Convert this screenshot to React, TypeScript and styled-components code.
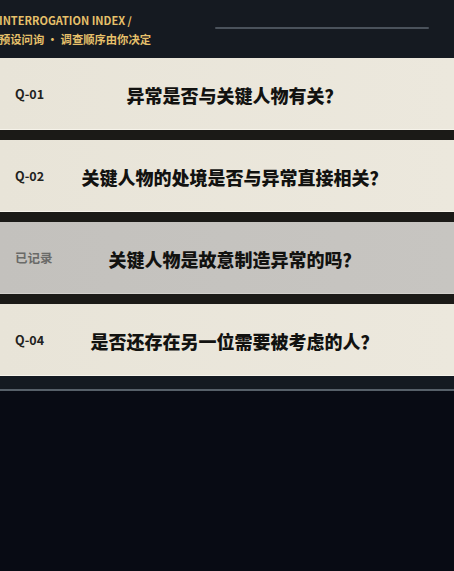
import React from "react";
import styled, { createGlobalStyle } from "styled-components";

const GlobalStyle = createGlobalStyle`
  html, body {
    margin: 0;
    padding: 0;
    background: #080b14;
    font-family: "Noto Sans CJK SC", "Noto Sans", sans-serif;
  }
`;

/******************************************************
 *********************** Style *************************
 ******************************************************/

const Page = styled.div`
  width: 454px;
  height: 571px;
  overflow: hidden;
  display: flex;
  flex-direction: column;
  background: #080b14;
`;

const Header = styled.header`
  height: 58px;
  box-sizing: border-box;
  padding: 10px 25px 0 0;
  display: flex;
  align-items: flex-start;
  gap: 64px;
  background: #151a21;
`;

const HeaderText = styled.div`
  display: flex;
  flex-direction: column;
  margin-left: -1px;
  color: #e6c06a;
  font-weight: 700;
`;

const Title = styled.div`
  font-size: 11px;
  line-height: 20px;
`;

const Subtitle = styled.div`
  font-size: 11.3px;
  line-height: 18px;
`;

const Rule = styled.div`
  flex: 1;
  height: 2px;
  margin-top: 17px;
  border-radius: 1px;
  background: #4a525b;
`;

const List = styled.div`
  display: flex;
  flex-direction: column;
  gap: 10px;
  background: #1b1a17;
`;

const Card = styled.div<{ done: 1 | 0 }>`
  height: 72px;
  box-sizing: border-box;
  padding: 0 0 0 15px;
  display: grid;
  grid-template-columns: 1fr auto 1fr;
  align-items: center;
  background: ${({ done }) =>
    done
      ? "linear-gradient(90deg, #c3c1bd, #c7c5c1)"
      : "linear-gradient(90deg, #e8e4d8, #ece8dd)"};
  border-bottom: 1px solid ${({ done }) => (done ? "#d2d0cc" : "#f6f3ea")};
`;

const Label = styled.span<{ done: 1 | 0 }>`
  font-size: 12.5px;
  font-weight: 700;
  color: ${({ done }) => (done ? "#6a6a68" : "#222220")};
`;

const Question = styled.span`
  grid-column: 2;
  font-size: 18px;
  font-weight: 900;
  color: #121210;
  white-space: nowrap;
  margin-top: 2px;
`;

const Footer = styled.div`
  height: 13px;
  background: #141a21;
  border-bottom: 2px solid #566069;
`;

/******************************************************
 ************************* Dom *************************
 ******************************************************/

const questions = [
  { id: "Q-01", text: "异常是否与关键人物有关？", done: 0 as const },
  { id: "Q-02", text: "关键人物的处境是否与异常直接相关？", done: 0 as const },
  { id: "已记录", text: "关键人物是故意制造异常的吗？", done: 1 as const },
  { id: "Q-04", text: "是否还存在另一位需要被考虑的人？", done: 0 as const },
];

const App: React.FC = () => (
  <Page>
    <GlobalStyle />
    <Header>
      <HeaderText>
        <Title>INTERROGATION INDEX /</Title>
        <Subtitle>预设问询 · 调查顺序由你决定</Subtitle>
      </HeaderText>
      <Rule />
    </Header>
    <List>
      {questions.map((q) => (
        <Card key={q.id} done={q.done}>
          <Label done={q.done}>{q.id}</Label>
          <Question>{q.text}</Question>
        </Card>
      ))}
    </List>
    <Footer />
  </Page>
);

export default App;
